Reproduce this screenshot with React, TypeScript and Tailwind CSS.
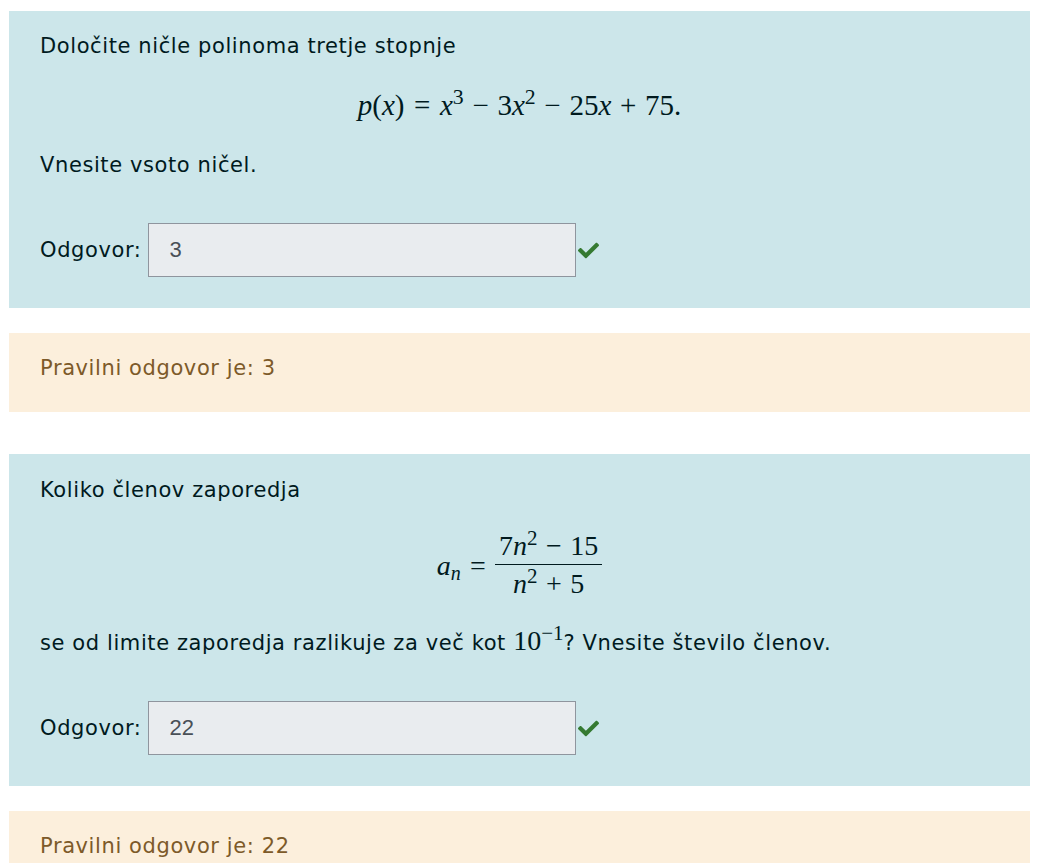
import { FaCheck } from "react-icons/fa";

const textFont = "font-['DejaVu_Sans',sans-serif]";
const mathFont = "font-['Liberation_Serif',serif]";

function V({ children }: { children: React.ReactNode }) {
  return <i className="italic">{children}</i>;
}

// operator with MathJax-like spacing
function Op({ children, rel }: { children: React.ReactNode; rel?: boolean }) {
  return (
    <span className={rel ? "mx-[0.33em]" : "mx-[0.3em]"}>{children}</span>
  );
}

function Answer({ value }: { value: string }) {
  return (
    <div className="flex items-center h-[54px]">
      <span className="mr-[7px]">Odgovor:</span>
      <div className="w-[428px] h-[54px] border border-[#8f959e] bg-[#e9ecef] flex items-center pl-[20px] text-[#495057] font-['Liberation_Sans',sans-serif] text-[22px] tracking-normal">
        {value}
      </div>
      <FaCheck className="ml-[2px] text-[#357a32] w-[21px] h-[21px]" />
    </div>
  );
}

function Outcome({ text }: { text: string }) {
  return (
    <div className="bg-[#fcefdc] text-[#7d5a29] pl-[31px] pt-[20px] pb-[29px] leading-[30px]">
      {text}
    </div>
  );
}

export default function App() {
  return (
    <div
      className={`${textFont} bg-white min-h-[863px] px-[9px] pt-[11px] text-[21px] tracking-[0.6px] leading-[30px] text-[#001a1e]`}
    >
      {/* vprašanje 1 */}
      <div className="bg-[#cce6ea] pl-[31px] pr-[31px] pt-[20px] pb-[31px]">
        <p>Določite ničle polinoma tretje stopnje</p>
        <div
          className={`${mathFont} text-[29px] tracking-normal h-[40px] mt-[24px] flex items-center justify-center`}
        >
          <span>
            <V>p</V>(<V>x</V>)<Op rel>=</Op>
            <V>x</V>
            <sup>3</sup>
            <Op>−</Op>3<V>x</V>
            <sup>2</sup>
            <Op>−</Op>25<V>x</V>
            <Op>+</Op>75.
          </span>
        </div>
        <p className="mt-[25px]">Vnesite vsoto ničel.</p>
        <div className="mt-[43px]">
          <Answer value="3" />
        </div>
      </div>

      <div className="mt-[25px]">
        <Outcome text="Pravilni odgovor je: 3" />
      </div>

      {/* vprašanje 2 */}
      <div className="mt-[42px] bg-[#cce6ea] pl-[31px] pr-[31px] pt-[21px] pb-[31px]">
        <p>Koliko členov zaporedja</p>
        <div
          className={`${mathFont} text-[28px] tracking-normal mt-[22px] h-[77px] flex items-center justify-center`}
        >
          <span className="flex items-center">
            <span>
              <V>a</V>
              <sub className="text-[20px] italic">n</sub>
              <Op rel>=</Op>
            </span>
            <span className="inline-flex flex-col items-center">
              <span className="px-[4px] leading-[36px]">
                7<V>n</V>
                <sup>2</sup>
                <Op>−</Op>15
              </span>
              <span className="px-[4px] border-t border-[#001a1e] leading-[38px] w-full text-center">
                <V>n</V>
                <sup>2</sup>
                <Op>+</Op>5
              </span>
            </span>
          </span>
        </div>
        <p className="mt-[22px]">
          se od limite zaporedja razlikuje za več kot{" "}
          <span className={`${mathFont} text-[28px] tracking-normal`}>
            10<sup>−1</sup>
          </span>
          ? Vnesite število členov.
        </p>
        <div className="mt-[43px]">
          <Answer value="22" />
        </div>
      </div>

      <div className="mt-[25px]">
        <Outcome text="Pravilni odgovor je: 22" />
      </div>
    </div>
  );
}
